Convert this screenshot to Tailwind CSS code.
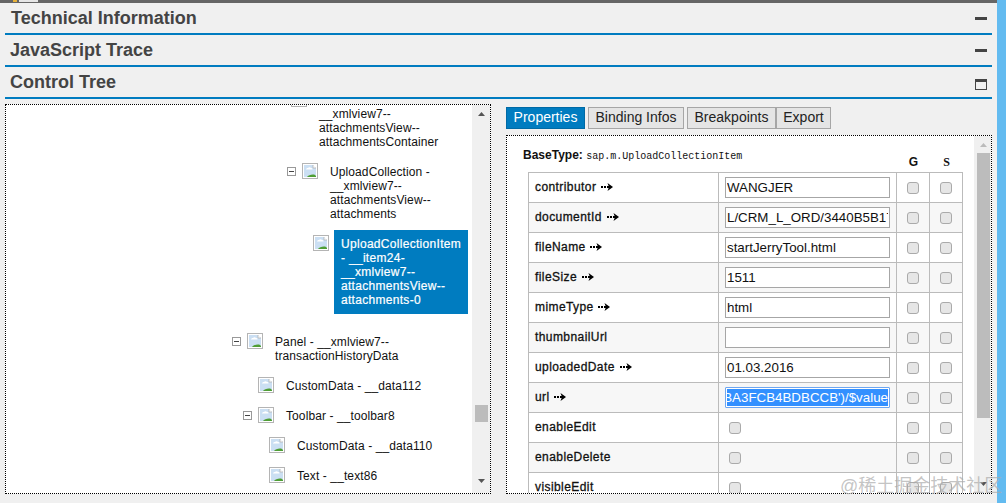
<!DOCTYPE html>
<html lang="en">
  <head>
    <meta charset="UTF-8" />
    <title>Control Tree</title>
    <script src="https://cdn.jsdelivr.net/npm/@tailwindcss/browser@4"></script>
  </head>
  <body class="w-[1006px] h-[503px] overflow-hidden flex bg-[#f0f0f0] font-['Liberation_Sans',sans-serif] text-[#111]">
    <svg class="hidden">
      <symbol id="img" viewBox="0 0 16 16">
        <rect x="0.5" y="0.5" width="15" height="15" fill="#fff" stroke="#b4b4b4" />
        <path d="M2 2h9l3 3v9H2z" fill="#cbdff3" />
        <path d="M4 6.500c0-1 1-1.500 2-1.500 .5-1 2.500-1 3 0 1 0 1.500 .6 1.500 1.500z" fill="#fff" />
        <path d="M11 2v3h3" fill="#fff" stroke="#b4b4b4" stroke-width="0.8" />
        <path d="M5 14c1-2 6-3 8-2l1 1v1z" fill="#4f9e35" />
      </symbol>
      <symbol id="minusbox" viewBox="0 0 9 9">
        <rect x="0.5" y="0.5" width="8" height="8" fill="#fff" stroke="#999" />
        <path d="M2 4.500h5" stroke="#444" />
      </symbol>
      <symbol id="arrow" viewBox="0 0 12 8">
        <path d="M0 3h2v2H0zM3 3h2v2H3zM6 3h3v2H6z" fill="#000" />
        <path d="M6.500 0L12 4L6.500 8L8 4z" fill="#000" />
      </symbol>
    </svg>

    <main class="w-[997px] h-full flex flex-col">
      <div class="h-[3px] bg-[#666] flex pl-[13px] shrink-0">
        <span class="w-[4px] h-[2px] bg-[#e8b23a]"></span>
        <span class="w-[19px] h-[2px] ml-[2px] bg-[#e6e6e6]"></span>
      </div>

      <section class="px-[5px]">
        <div class="h-[32px] border-b-2 border-[#007cc0] flex items-center justify-between pl-[6px] pr-[5px]">
          <h2 class="text-[18px] font-bold text-[#444]">Technical Information</h2>
          <span class="w-[12px] h-[3px] bg-[#444]"></span>
        </div>
        <div class="h-[32px] border-b-2 border-[#007cc0] flex items-center justify-between pl-[5px] pr-[5px]">
          <h2 class="text-[18px] font-bold text-[#444]">JavaScript Trace</h2>
          <span class="w-[12px] h-[3px] bg-[#444]"></span>
        </div>
        <div class="h-[32px] border-b-2 border-[#007cc0] flex items-center justify-between pl-[5px] pr-[5px]">
          <h2 class="text-[18px] font-bold text-[#444]">Control Tree</h2>
          <span class="w-[12px] h-[11px] mt-[4px] border border-[#444] border-t-[3px]"></span>
        </div>
      </section>

      <section class="flex gap-[15px] px-[5px] pt-[5px]">
        <!-- tree pane -->
        <div class="w-[486px] h-[390px] border border-dotted border-black bg-white flex overflow-hidden">
          <div class="w-[467px] -mt-[14px] text-[12px] leading-[14px] tracking-[0.1px]">
            <div class="flex pb-[14px] pl-[285px]">
              <svg class="w-[16px] h-[16px] shrink-0"><use href="#img" /></svg>
              <p class="ml-[12px] mt-[16px]">__xmlview7--<br />attachmentsView--<br />attachmentsContainer</p>
            </div>
            <div class="flex pb-[14px] pl-[281px]">
              <svg class="w-[9px] h-[9px] mt-[4px] mr-[6px] shrink-0"><use href="#minusbox" /></svg>
              <svg class="w-[16px] h-[16px] shrink-0"><use href="#img" /></svg>
              <p class="ml-[12px] mt-[2px]">UploadCollection -<br />__xmlview7--<br />attachmentsView--<br />attachments</p>
            </div>
            <div class="flex pb-[19px] pl-[307px]">
              <svg class="w-[16px] h-[16px] shrink-0"><use href="#img" /></svg>
              <p class="ml-[5px] -mt-[5px] w-[134px] p-[7px] bg-[#007cc0] text-white [-webkit-text-stroke:0.2px_#fff] tracking-[0.3px]">UploadCollectionItem<br />- __item24-<br />__xmlview7--<br />attachmentsView--<br />attachments-0</p>
            </div>
            <div class="flex pb-[14px] pl-[226px]">
              <svg class="w-[9px] h-[9px] mt-[4px] mr-[6px] shrink-0"><use href="#minusbox" /></svg>
              <svg class="w-[16px] h-[16px] shrink-0"><use href="#img" /></svg>
              <p class="ml-[12px] mt-[2px]">Panel - __xmlview7--<br />transactionHistoryData</p>
            </div>
            <div class="flex pb-[14px] pl-[252px]">
              <svg class="w-[16px] h-[16px] shrink-0"><use href="#img" /></svg>
              <p class="ml-[12px] mt-[2px]">CustomData - __data112</p>
            </div>
            <div class="flex pb-[14px] pl-[237px]">
              <svg class="w-[9px] h-[9px] mt-[4px] mr-[6px] shrink-0"><use href="#minusbox" /></svg>
              <svg class="w-[16px] h-[16px] shrink-0"><use href="#img" /></svg>
              <p class="ml-[12px] mt-[2px]">Toolbar - __toolbar8</p>
            </div>
            <div class="flex pb-[14px] pl-[263px]">
              <svg class="w-[16px] h-[16px] shrink-0"><use href="#img" /></svg>
              <p class="ml-[12px] mt-[2px]">CustomData - __data110</p>
            </div>
            <div class="flex pb-[14px] pl-[263px]">
              <svg class="w-[16px] h-[16px] shrink-0"><use href="#img" /></svg>
              <p class="ml-[12px] mt-[2px]">Text - __text86</p>
            </div>
          </div>
          <!-- scrollbar -->
          <div class="w-[18px] h-full bg-[#f0f0f0] flex flex-col items-center shrink-0">
            <svg class="w-[7px] h-[4px] mt-[7px]" viewBox="0 0 7 4"><path d="M3.500 0L7 4H0z" fill="#555" /></svg>
            <div class="w-[13px] h-[17px] mt-[289px] bg-[#bcbcbc]"></div>
            <svg class="w-[7px] h-[4px] mt-[57px]" viewBox="0 0 7 4"><path d="M0 0h7L3.500 4z" fill="#555" /></svg>
          </div>
        </div>

        <!-- properties pane -->
        <div class="w-[486px]">
          <nav class="flex h-[22px] mt-[3px] text-[14px] leading-[18px]">
            <button class="w-[79px] pb-[2px] bg-[#007cc0] text-white border border-[#006aa5]">Properties</button>
            <button class="w-[96px] pb-[2px] ml-[3px] bg-[#e5e5e5] border border-[#a6a6a6] text-[#222]">Binding Infos</button>
            <button class="w-[89px] pb-[2px] ml-[3px] bg-[#e5e5e5] border border-[#a6a6a6] text-[#222]">Breakpoints</button>
            <button class="w-[55px] pb-[2px] bg-[#e5e5e5] border border-[#a6a6a6] text-[#222]">Export</button>
          </nav>
          <div class="mt-[6px] h-[359px] border border-dotted border-black bg-white flex overflow-hidden">
            <div class="w-[467px] shrink-0">
              <div class="h-[36px] flex pl-[16px] text-[12px] leading-[14px]">
                <p class="mt-[12px] w-[374px] font-bold">BaseType: <span class="font-['Liberation_Mono',monospace] text-[10px] font-normal">sap.m.UploadCollectionItem</span></p>
                <span class="mt-[19px] w-[33px] text-center font-bold">G</span>
                <span class="mt-[19px] w-[33px] text-center font-bold font-['Liberation_Serif',serif]">S</span>
              </div>
              <table class="ml-[21px] w-[435px] table-fixed border-collapse text-[12px]">
                <colgroup>
                  <col class="w-[190px]" />
                  <col class="w-[178px]" />
                  <col class="w-[33px]" />
                  <col class="w-[33px]" />
                </colgroup>
                <tbody>
                  <tr class="h-[30px] bg-white">
                    <td class="border border-[#bbb] pl-[6px] pb-[2px] tracking-[0.42px] [-webkit-text-stroke:0.3px_#111]">contributor <svg class="inline w-[12px] h-[8px] ml-[1px]"><use href="#arrow" /></svg></td>
                    <td class="border border-[#bbb] pl-[6px]"><input class="block w-[165px] h-[21px] bg-white border border-[#a6a6a6] px-[1px] text-[13.33px] outline-none" value="WANGJER" /></td>
                    <td class="border border-[#bbb]"><input type="checkbox" class="block mx-auto w-[12px] h-[12px] appearance-none rounded-[3px] border border-[#aaa] bg-[#e6e6e6]" /></td>
                    <td class="border border-[#bbb]"><input type="checkbox" class="block mx-auto w-[12px] h-[12px] appearance-none rounded-[3px] border border-[#aaa] bg-[#e6e6e6]" /></td>
                  </tr>
                  <tr class="h-[30px] bg-[#f7f7f7]">
                    <td class="border border-[#bbb] pl-[6px] pb-[2px] tracking-[0.42px] [-webkit-text-stroke:0.3px_#111]">documentId <svg class="inline w-[12px] h-[8px] ml-[1px]"><use href="#arrow" /></svg></td>
                    <td class="border border-[#bbb] pl-[6px]"><input class="block w-[165px] h-[21px] bg-white border border-[#a6a6a6] px-[1px] text-[13.33px] outline-none" value="L/CRM_L_ORD/3440B5B172" /></td>
                    <td class="border border-[#bbb]"><input type="checkbox" class="block mx-auto w-[12px] h-[12px] appearance-none rounded-[3px] border border-[#aaa] bg-[#e6e6e6]" /></td>
                    <td class="border border-[#bbb]"><input type="checkbox" class="block mx-auto w-[12px] h-[12px] appearance-none rounded-[3px] border border-[#aaa] bg-[#e6e6e6]" /></td>
                  </tr>
                  <tr class="h-[30px] bg-white">
                    <td class="border border-[#bbb] pl-[6px] pb-[2px] tracking-[0.42px] [-webkit-text-stroke:0.3px_#111]">fileName <svg class="inline w-[12px] h-[8px] ml-[1px]"><use href="#arrow" /></svg></td>
                    <td class="border border-[#bbb] pl-[6px]"><input class="block w-[165px] h-[21px] bg-white border border-[#a6a6a6] px-[1px] text-[13.33px] outline-none" value="startJerryTool.html" /></td>
                    <td class="border border-[#bbb]"><input type="checkbox" class="block mx-auto w-[12px] h-[12px] appearance-none rounded-[3px] border border-[#aaa] bg-[#e6e6e6]" /></td>
                    <td class="border border-[#bbb]"><input type="checkbox" class="block mx-auto w-[12px] h-[12px] appearance-none rounded-[3px] border border-[#aaa] bg-[#e6e6e6]" /></td>
                  </tr>
                  <tr class="h-[30px] bg-[#f7f7f7]">
                    <td class="border border-[#bbb] pl-[6px] pb-[2px] tracking-[0.42px] [-webkit-text-stroke:0.3px_#111]">fileSize <svg class="inline w-[12px] h-[8px] ml-[1px]"><use href="#arrow" /></svg></td>
                    <td class="border border-[#bbb] pl-[6px]"><input class="block w-[165px] h-[21px] bg-white border border-[#a6a6a6] px-[1px] text-[13.33px] outline-none" value="1511" /></td>
                    <td class="border border-[#bbb]"><input type="checkbox" class="block mx-auto w-[12px] h-[12px] appearance-none rounded-[3px] border border-[#aaa] bg-[#e6e6e6]" /></td>
                    <td class="border border-[#bbb]"><input type="checkbox" class="block mx-auto w-[12px] h-[12px] appearance-none rounded-[3px] border border-[#aaa] bg-[#e6e6e6]" /></td>
                  </tr>
                  <tr class="h-[30px] bg-white">
                    <td class="border border-[#bbb] pl-[6px] pb-[2px] tracking-[0.42px] [-webkit-text-stroke:0.3px_#111]">mimeType <svg class="inline w-[12px] h-[8px] ml-[1px]"><use href="#arrow" /></svg></td>
                    <td class="border border-[#bbb] pl-[6px]"><input class="block w-[165px] h-[21px] bg-white border border-[#a6a6a6] px-[1px] text-[13.33px] outline-none" value="html" /></td>
                    <td class="border border-[#bbb]"><input type="checkbox" class="block mx-auto w-[12px] h-[12px] appearance-none rounded-[3px] border border-[#aaa] bg-[#e6e6e6]" /></td>
                    <td class="border border-[#bbb]"><input type="checkbox" class="block mx-auto w-[12px] h-[12px] appearance-none rounded-[3px] border border-[#aaa] bg-[#e6e6e6]" /></td>
                  </tr>
                  <tr class="h-[30px] bg-[#f7f7f7]">
                    <td class="border border-[#bbb] pl-[6px] pb-[2px] tracking-[0.42px] [-webkit-text-stroke:0.3px_#111]">thumbnailUrl</td>
                    <td class="border border-[#bbb] pl-[6px]"><input class="block w-[165px] h-[21px] bg-white border border-[#a6a6a6] px-[1px] text-[13.33px] outline-none" value="" /></td>
                    <td class="border border-[#bbb]"><input type="checkbox" class="block mx-auto w-[12px] h-[12px] appearance-none rounded-[3px] border border-[#aaa] bg-[#e6e6e6]" /></td>
                    <td class="border border-[#bbb]"><input type="checkbox" class="block mx-auto w-[12px] h-[12px] appearance-none rounded-[3px] border border-[#aaa] bg-[#e6e6e6]" /></td>
                  </tr>
                  <tr class="h-[30px] bg-white">
                    <td class="border border-[#bbb] pl-[6px] pb-[2px] tracking-[0.42px] [-webkit-text-stroke:0.3px_#111]">uploadedDate <svg class="inline w-[12px] h-[8px] ml-[1px]"><use href="#arrow" /></svg></td>
                    <td class="border border-[#bbb] pl-[6px]"><input class="block w-[165px] h-[21px] bg-white border border-[#a6a6a6] px-[1px] text-[13.33px] outline-none" value="01.03.2016" /></td>
                    <td class="border border-[#bbb]"><input type="checkbox" class="block mx-auto w-[12px] h-[12px] appearance-none rounded-[3px] border border-[#aaa] bg-[#e6e6e6]" /></td>
                    <td class="border border-[#bbb]"><input type="checkbox" class="block mx-auto w-[12px] h-[12px] appearance-none rounded-[3px] border border-[#aaa] bg-[#e6e6e6]" /></td>
                  </tr>
                  <tr class="h-[30px] bg-[#f7f7f7]">
                    <td class="border border-[#bbb] pl-[6px] pb-[2px] tracking-[0.42px] [-webkit-text-stroke:0.3px_#111]">url <svg class="inline w-[12px] h-[8px] ml-[1px]"><use href="#arrow" /></svg></td>
                    <td class="border border-[#bbb] pl-[6px]">
                      <div class="w-[165px] h-[21px] border border-[#6ea6f0] rounded-[1px] p-[1px] bg-white overflow-hidden flex justify-end">
                        <span class="h-[17px] w-[161px] leading-[17px] bg-[#3390ff] text-white text-[13.33px] whitespace-nowrap flex justify-end">BA3FCB4BDBCCB')/$value</span>
                      </div>
                    </td>
                    <td class="border border-[#bbb]"><input type="checkbox" class="block mx-auto w-[12px] h-[12px] appearance-none rounded-[3px] border border-[#aaa] bg-[#e6e6e6]" /></td>
                    <td class="border border-[#bbb]"><input type="checkbox" class="block mx-auto w-[12px] h-[12px] appearance-none rounded-[3px] border border-[#aaa] bg-[#e6e6e6]" /></td>
                  </tr>
                  <tr class="h-[30px] bg-white">
                    <td class="border border-[#bbb] pl-[6px] pb-[2px] tracking-[0.42px] [-webkit-text-stroke:0.3px_#111]">enableEdit</td>
                    <td class="border border-[#bbb] pl-[10px]"><input type="checkbox" class="block w-[12px] h-[12px] appearance-none rounded-[3px] border border-[#aaa] bg-[#e6e6e6]" /></td>
                    <td class="border border-[#bbb]"><input type="checkbox" class="block mx-auto w-[12px] h-[12px] appearance-none rounded-[3px] border border-[#aaa] bg-[#e6e6e6]" /></td>
                    <td class="border border-[#bbb]"><input type="checkbox" class="block mx-auto w-[12px] h-[12px] appearance-none rounded-[3px] border border-[#aaa] bg-[#e6e6e6]" /></td>
                  </tr>
                  <tr class="h-[30px] bg-[#f7f7f7]">
                    <td class="border border-[#bbb] pl-[6px] pb-[2px] tracking-[0.42px] [-webkit-text-stroke:0.3px_#111]">enableDelete</td>
                    <td class="border border-[#bbb] pl-[10px]"><input type="checkbox" class="block w-[12px] h-[12px] appearance-none rounded-[3px] border border-[#aaa] bg-[#e6e6e6]" /></td>
                    <td class="border border-[#bbb]"><input type="checkbox" class="block mx-auto w-[12px] h-[12px] appearance-none rounded-[3px] border border-[#aaa] bg-[#e6e6e6]" /></td>
                    <td class="border border-[#bbb]"><input type="checkbox" class="block mx-auto w-[12px] h-[12px] appearance-none rounded-[3px] border border-[#aaa] bg-[#e6e6e6]" /></td>
                  </tr>
                  <tr class="h-[30px] bg-white">
                    <td class="border border-[#bbb] pl-[6px] pb-[2px] tracking-[0.42px] [-webkit-text-stroke:0.3px_#111]">visibleEdit</td>
                    <td class="border border-[#bbb] pl-[10px]"><input type="checkbox" class="block w-[12px] h-[12px] appearance-none rounded-[3px] border border-[#aaa] bg-[#e6e6e6]" /></td>
                    <td class="border border-[#bbb]"><input type="checkbox" class="block mx-auto w-[12px] h-[12px] appearance-none rounded-[3px] border border-[#aaa] bg-[#e6e6e6]" /></td>
                    <td class="border border-[#bbb]"><input type="checkbox" class="block mx-auto w-[12px] h-[12px] appearance-none rounded-[3px] border border-[#aaa] bg-[#e6e6e6]" /></td>
                  </tr>
                </tbody>
              </table>
            </div>
            <div class="w-[18px] h-full bg-[#f0f0f0] flex flex-col items-center shrink-0">
              <svg class="w-[7px] h-[4px] mt-[7px]" viewBox="0 0 7 4"><path d="M3.500 0L7 4H0z" fill="#bbb" /></svg>
              <div class="w-[13px] h-[265px] mt-[6px] bg-[#bcbcbc]"></div>
              <svg class="w-[7px] h-[4px] mt-[64px]" viewBox="0 0 7 4"><path d="M0 0h7L3.500 4z" fill="#555" /></svg>
            </div>
          </div>
        </div>
      </section>
    </main>

    <aside class="w-[9px] h-full bg-[#63bbf0]"></aside>

    <!-- watermark over the corner -->
    <span class="absolute left-[840px] top-[476px] text-[18px] leading-[21px] whitespace-nowrap text-[#aaa]/70 font-['Liberation_Sans','Noto_Sans_CJK_SC',sans-serif]">@稀土掘金技术社区</span>
  </body>
</html>
